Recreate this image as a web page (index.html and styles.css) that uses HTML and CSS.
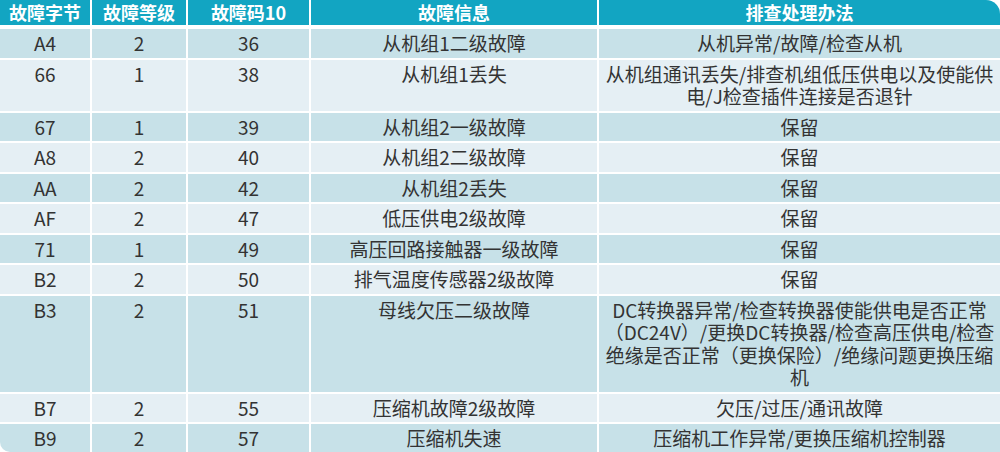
FILE: index.html
```html
<!DOCTYPE html>
<html lang="zh-CN">
<head>
<meta charset="utf-8">
<title>故障代码表</title>
<link rel="stylesheet" href="styles.css">
</head>
<body>
<div class="wrap">
<table class="fault">
  <colgroup>
    <col class="c1"><col class="c2"><col class="c3"><col class="c4"><col class="c5">
  </colgroup>
  <thead>
    <tr><th>故障字节</th><th>故障等级</th><th>故障码10</th><th>故障信息</th><th>排查处理办法</th></tr>
  </thead>
  <tbody>
    <tr class="dark"><td>A4</td><td>2</td><td>36</td><td>从机组1二级故障</td><td>从机异常/故障/检查从机</td></tr>
    <tr class="light"><td>66</td><td>1</td><td>38</td><td>从机组1丢失</td><td>从机组通讯丢失/排查机组低压供电以及使能供<br>电/J检查插件连接是否退针</td></tr>
    <tr class="dark"><td>67</td><td>1</td><td>39</td><td>从机组2一级故障</td><td>保留</td></tr>
    <tr class="light"><td>A8</td><td>2</td><td>40</td><td>从机组2二级故障</td><td>保留</td></tr>
    <tr class="dark"><td>AA</td><td>2</td><td>42</td><td>从机组2丢失</td><td>保留</td></tr>
    <tr class="light"><td>AF</td><td>2</td><td>47</td><td>低压供电2级故障</td><td>保留</td></tr>
    <tr class="dark"><td>71</td><td>1</td><td>49</td><td>高压回路接触器一级故障</td><td>保留</td></tr>
    <tr class="light"><td>B2</td><td>2</td><td>50</td><td>排气温度传感器2级故障</td><td>保留</td></tr>
    <tr class="dark"><td>B3</td><td>2</td><td>51</td><td>母线欠压二级故障</td><td>DC转换器异常/检查转换器使能供电是否正常<br>（DC24V）/更换DC转换器/检查高压供电/检查<br>绝缘是否正常（更换保险）/绝缘问题更换压缩<br>机</td></tr>
    <tr class="light"><td>B7</td><td>2</td><td>55</td><td>压缩机故障2级故障</td><td>欠压/过压/通讯故障</td></tr>
    <tr class="dark"><td>B9</td><td>2</td><td>57</td><td>压缩机失速</td><td>压缩机工作异常/更换压缩机控制器</td></tr>
  </tbody>
</table>
</div>
</body>
</html>
```

FILE: styles.css
```css
html, body {
  margin: 0;
  padding: 0;
  background: #ffffff;
}

.wrap {
  width: 1000px;
  height: 452px;
  overflow: hidden;
  border-radius: 0 14px 0 10px;
}

.fault {
  width: 1000px;
  border-collapse: separate;
  border-spacing: 0;
  table-layout: fixed;
  font-family: "Noto Sans CJK SC", "Noto Sans", sans-serif;
  color: #333333;
}

.c1 { width: 92px; }
.c2 { width: 96px; }
.c3 { width: 123px; }
.c4 { width: 288px; }
.c5 { width: 401px; }

.fault th {
  background: #12a5c2;
  color: #ffffff;
  font-weight: 700;
  font-size: 18px;
  line-height: 25px;
  height: 25px;
  padding: 0;
  text-align: center;
  border-right: 2px solid #ffffff;
  border-bottom: 4px solid #ffffff;
  white-space: nowrap;
}

.fault td {
  font-size: 19px;
  line-height: 22.5px;
  padding: 3px 4px;
  text-align: center;
  vertical-align: top;
  border-right: 2px solid #ffffff;
  border-bottom: 2px solid #ffffff;
}

.fault th:last-child,
.fault td:last-child {
  border-right: none;
}

.fault tbody tr:last-child td {
  border-bottom: none;
}

.dark td {
  background: #c7e1e8;
}

.light td {
  background: #e5eff4;
}
```
